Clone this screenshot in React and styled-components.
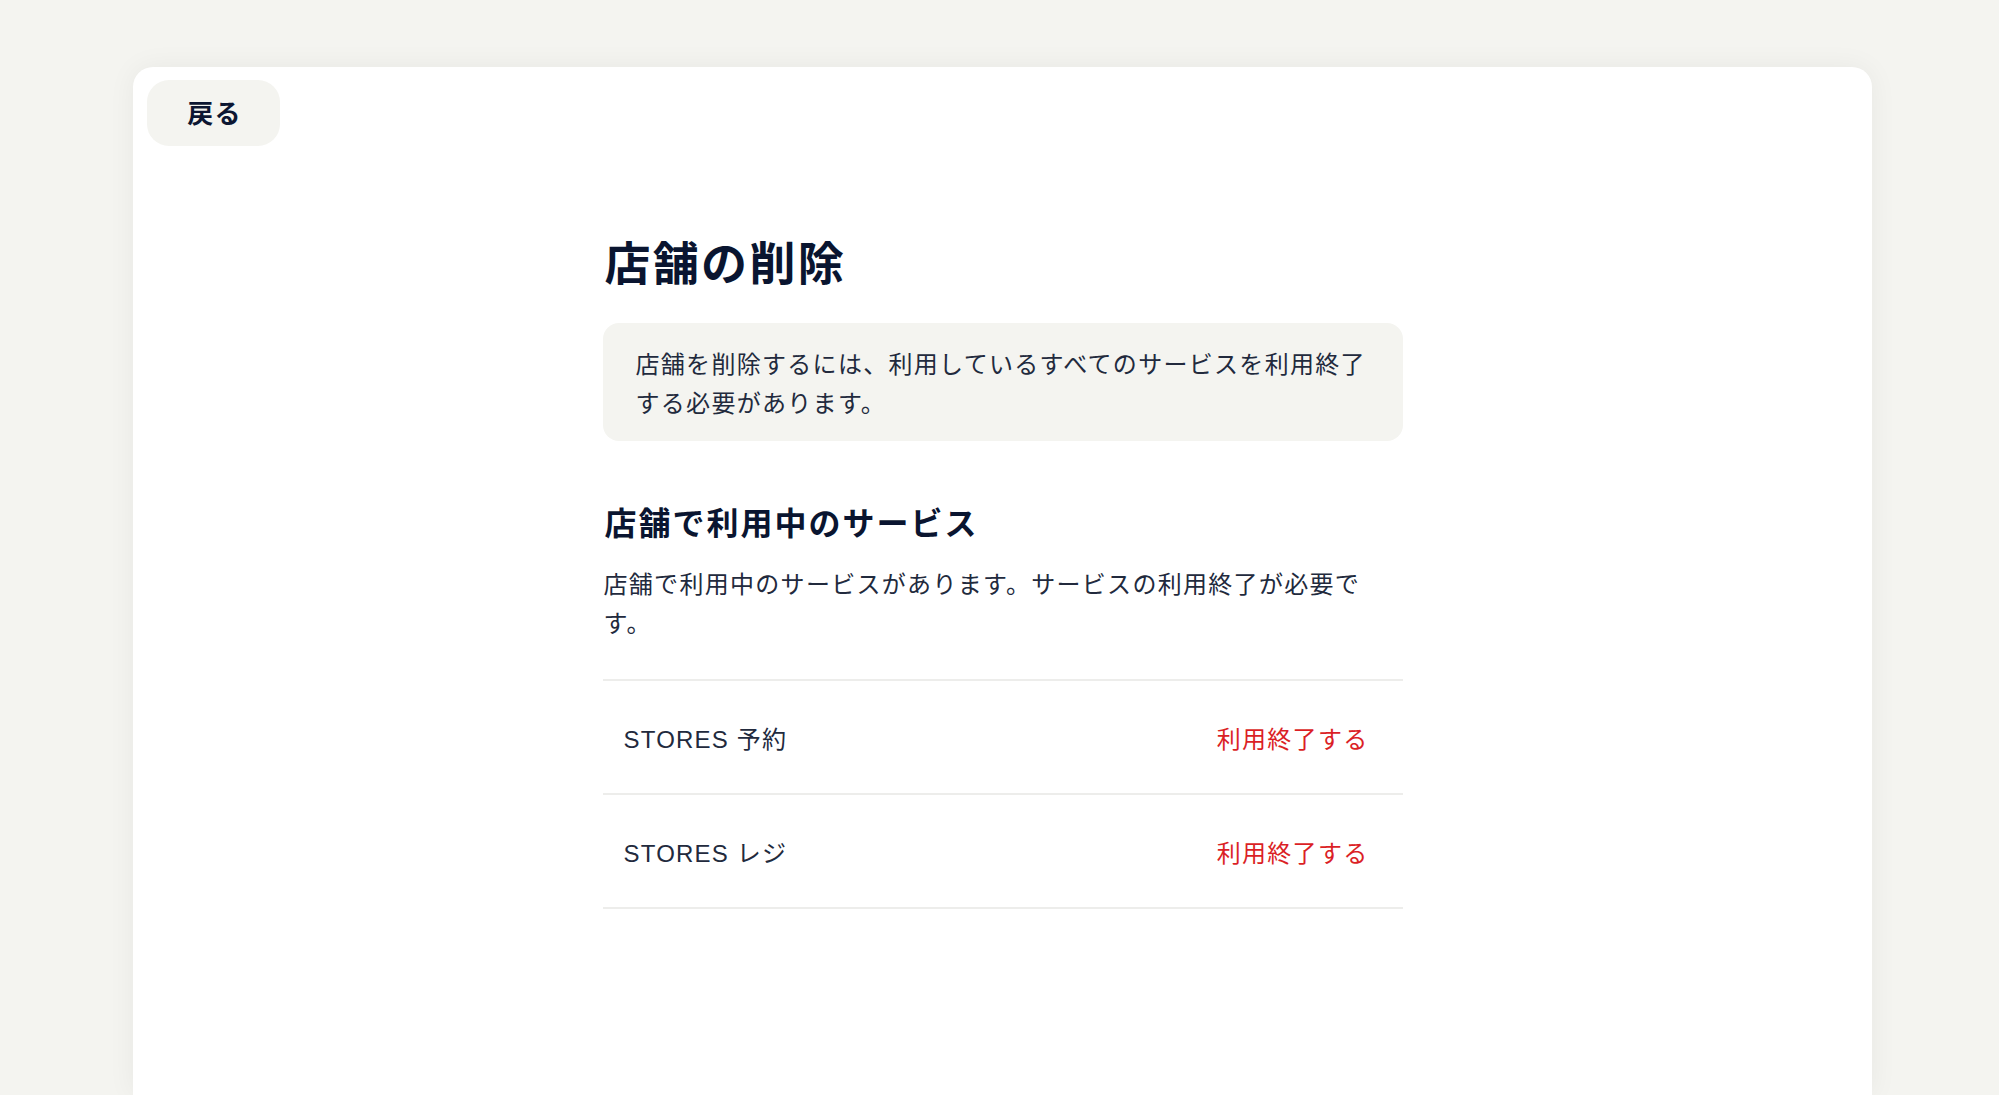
import React from "react";
import styled, { createGlobalStyle } from "styled-components";

const GlobalStyle = createGlobalStyle`
  * { box-sizing: border-box; }
  html, body {
    margin: 0;
    padding: 0;
    background: #f4f4f0;
    overflow: hidden;
  }
  body {
    font-family: "Liberation Sans", "Noto Sans CJK JP", sans-serif;
    color: #222a3d;
    -webkit-font-smoothing: antialiased;
  }
`;

const Page = styled.div`
  min-height: 100vh;
  padding-top: 67px;
`;

const Card = styled.div`
  margin-left: 133px;
  width: 1739px;
  min-height: calc(100vh - 67px);
  background: #ffffff;
  border-radius: 20px 20px 0 0;
  box-shadow: 0 0 28px rgba(0, 0, 0, 0.055);
  padding: 13px 14px 80px;
`;

const Header = styled.div`
  display: flex;
  align-items: center;
`;

const BackButton = styled.button`
  width: 133px;
  height: 66px;
  border: none;
  border-radius: 22px;
  background: #f4f4f0;
  color: #0c1632;
  font-family: "Noto Sans CJK JP", sans-serif;
  font-size: 26px;
  font-weight: 700;
  letter-spacing: 0.05em;
  display: flex;
  align-items: center;
  justify-content: center;
  padding: 0 0 4px 2px;
  cursor: pointer;
`;

const Content = styled.main`
  max-width: 800px;
  margin: 80px auto 0;
  display: flex;
  flex-direction: column;
`;

const Title = styled.h1`
  margin: 0 0 0 2px;
  font-family: "Noto Sans CJK JP", sans-serif;
  font-size: 46px;
  line-height: 69px;
  font-weight: 700;
  letter-spacing: 0.05em;
  color: #0a1530;
`;

const Notice = styled.div`
  margin-top: 28px;
  background: #f4f4f0;
  border-radius: 16px;
  padding: 20px 28px 20px 33px;
  font-family: "Noto Sans CJK JP", sans-serif;
  font-size: 24px;
  line-height: 39px;
  letter-spacing: 1.3px;
  color: #222a3d;
`;

const SectionTitle = styled.h2`
  margin: 56px 0 0 2px;
  font-family: "Noto Sans CJK JP", sans-serif;
  font-size: 32px;
  line-height: 48px;
  font-weight: 700;
  letter-spacing: 2px;
  color: #0a1530;
`;

const Description = styled.p`
  margin: 18px 0 0 1px;
  font-family: "Noto Sans CJK JP", sans-serif;
  font-size: 24px;
  line-height: 39px;
  letter-spacing: 1.3px;
  color: #222a3d;
`;

const ServiceList = styled.ul`
  list-style: none;
  margin: 38px 0 0;
  padding: 0;
  border-top: 2px solid #ededeb;
`;

const ServiceRow = styled.li`
  height: 114px;
  display: flex;
  align-items: center;
  justify-content: space-between;
  padding: 0 20px 0 21px;
  border-bottom: 2px solid #ededeb;
`;

const ServiceName = styled.span`
  font-family: "Liberation Sans", "Noto Sans CJK JP", sans-serif;
  font-size: 24px;
  letter-spacing: 0.05em;
  color: #222a3d;
`;

const EndButton = styled.button`
  border: none;
  background: transparent;
  padding: 8px 14px;
  font-family: "Noto Sans CJK JP", sans-serif;
  font-size: 24px;
  letter-spacing: 1.3px;
  color: #db1f26;
  cursor: pointer;
`;

const services = ["STORES 予約", "STORES レジ"];

export default function App() {
  return (
    <>
      <GlobalStyle />
      <Page>
        <Card>
          <Header>
            <BackButton>戻る</BackButton>
          </Header>
          <Content>
            <Title>店舗の削除</Title>
            <Notice>
              店舗を削除するには、利用しているすべてのサービスを利用終了する必要があります。
            </Notice>
            <SectionTitle>店舗で利用中のサービス</SectionTitle>
            <Description>
              店舗で利用中のサービスがあります。サービスの利用終了が必要です。
            </Description>
            <ServiceList>
              {services.map((s) => (
                <ServiceRow key={s}>
                  <ServiceName>{s}</ServiceName>
                  <EndButton>利用終了する</EndButton>
                </ServiceRow>
              ))}
            </ServiceList>
          </Content>
        </Card>
      </Page>
    </>
  );
}
